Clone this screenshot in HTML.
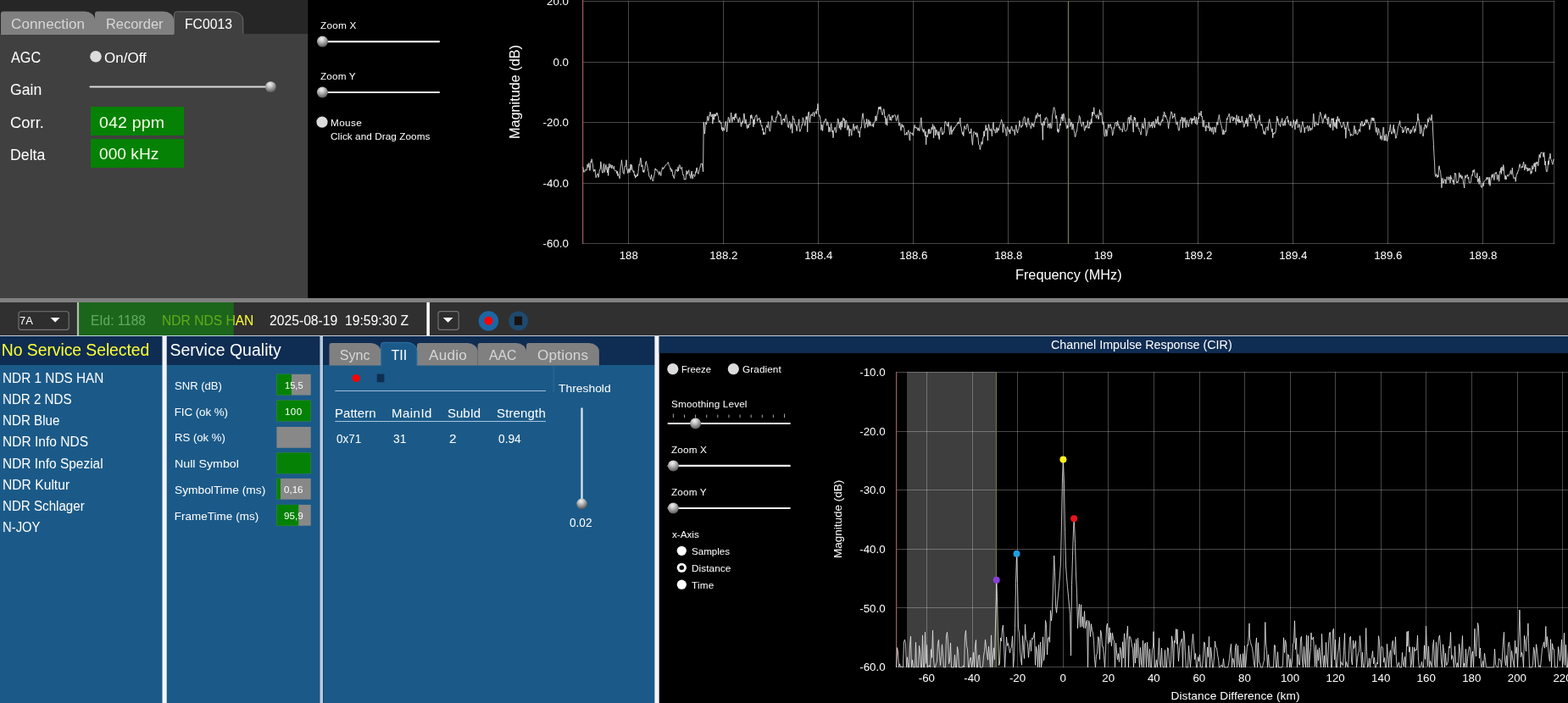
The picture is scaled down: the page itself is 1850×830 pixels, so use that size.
<!DOCTYPE html>
<html lang="en"><head><meta charset="utf-8"><title>DAB Receiver</title>
<style>
html,body{margin:0;padding:0;background:#000;}
body{width:1850px;height:830px;overflow:hidden;position:relative;font-family:"Liberation Sans", sans-serif;}
#root{position:absolute;left:0;top:0;width:1850px;height:830px;overflow:hidden;will-change:transform;background:#000;}
#root>svg{position:absolute;left:0;top:0;}
.t{position:absolute;white-space:pre;line-height:1.2;color:#fff;transform-origin:0 0;}
svg text{font-family:"Liberation Sans", sans-serif;font-size:13.3px;fill:#fff;}
</style></head><body><div id="root">
<svg width="1850" height="830" viewBox="0 0 1850 830">
<defs><radialGradient id="th" cx="0.42" cy="0.26" r="0.8"><stop offset="0" stop-color="#f2f2f2"/><stop offset="0.3" stop-color="#c8c8c8"/><stop offset="0.62" stop-color="#8e8e8e"/><stop offset="1" stop-color="#4a4a4a"/></radialGradient></defs>
<rect x="0" y="0" width="363.5" height="40" fill="#262626"/>
<rect x="0" y="40" width="363.5" height="312" fill="#404040"/>
<rect x="363.5" y="0" width="1486.5" height="352" fill="#000"/>
<path d="M1 41V16.6Q1 13.6 4 13.6H100A12 10 0 0 1 112 23.6V41Z" fill="#808080"/>
<path d="M112 41V16.6Q112 13.6 115 13.6H193A12 10 0 0 1 205 23.6V41Z" fill="#808080"/>
<path d="M205.5 41V16.8Q205.5 13.8 208.5 13.8H274.8A12 10 0 0 1 286.8 23.8V41" fill="#404040" stroke="#6c6c6c" stroke-width="1"/>
<rect x="205" y="40" width="82.5" height="2" fill="#404040"/>
<circle cx="113" cy="66.8" r="6.8" fill="#dcdcdc"/>
<path d="M106.5 102.4H319" fill="none" stroke="#dadada" stroke-width="2" stroke-linecap="round"/>
<circle cx="319.4" cy="102.6" r="6.4" fill="url(#th)"/>
<rect x="107" y="126.1" width="110" height="33.8" fill="#058205"/>
<rect x="107" y="164.1" width="110" height="33.8" fill="#058205"/>
<path d="M379 49.1H518" fill="none" stroke="#ececec" stroke-width="2.2" stroke-linecap="round"/>
<circle cx="380.5" cy="49.1" r="6.5" fill="url(#th)"/>
<path d="M379 109H518" fill="none" stroke="#ececec" stroke-width="2.2" stroke-linecap="round"/>
<circle cx="380.4" cy="109" r="6.5" fill="url(#th)"/>
<circle cx="380" cy="144.1" r="6.65" fill="#dcdcdc"/>
<path d="M741.5 1V288M853.5 1V288M965.5 1V288M1077.5 1V288M1189.5 1V288M1301.5 1V288M1413.5 1V288M1525.5 1V288M1637.5 1V288M1749.5 1V288M687 1.5H1834M687 73.5H1834M687 144.5H1834M687 216.5H1834M687 287.5H1834M1833.5 1V288" fill="none" stroke="rgba(255,255,255,0.28)" stroke-width="1"/>
<path d="M1260.5 1V288" fill="none" stroke="#727a42" stroke-width="1.3"/>
<path d="M687.6 0V288" fill="none" stroke="#98595c" stroke-width="1.3"/>
<polyline points="687.5,197.0 688.1,198.4 688.6,203.2 689.2,202.5 689.7,203.2 690.3,200.3 690.9,200.0 691.4,201.0 692.0,201.4 692.5,200.1 693.1,193.9 693.7,197.4 694.2,197.6 694.8,192.4 695.3,195.3 695.9,201.3 696.5,197.8 697.0,190.3 697.6,191.6 698.1,187.7 698.7,191.0 699.3,193.4 699.8,198.2 700.4,202.5 700.9,200.2 701.5,201.7 702.0,200.2 702.6,205.9 703.2,209.8 703.7,207.9 704.3,206.4 704.8,205.1 705.4,205.2 706.0,209.4 706.5,207.9 707.1,202.3 707.6,200.1 708.2,199.9 708.8,190.8 709.3,194.1 709.9,200.6 710.4,202.9 711.0,204.3 711.6,203.0 712.1,194.3 712.7,193.3 713.2,203.4 713.8,201.1 714.4,197.0 714.9,194.4 715.5,199.8 716.0,199.9 716.6,204.0 717.2,197.2 717.7,207.4 718.3,197.8 718.8,193.2 719.4,198.2 720.0,197.2 720.5,194.4 721.1,196.5 721.6,198.9 722.2,194.8 722.8,197.5 723.3,198.8 723.9,199.4 724.4,196.2 725.0,200.5 725.6,201.9 726.1,201.7 726.7,201.5 727.2,201.3 727.8,204.9 728.3,202.1 728.9,207.5 729.5,204.8 730.0,208.0 730.6,208.3 731.1,210.8 731.7,201.8 732.3,196.4 732.8,194.2 733.4,188.8 733.9,192.5 734.5,197.9 735.1,204.0 735.6,204.3 736.2,205.5 736.7,199.9 737.3,195.8 737.9,196.7 738.4,195.4 739.0,188.8 739.5,200.1 740.1,199.7 740.7,204.5 741.2,203.2 741.8,199.4 742.3,199.1 742.9,203.7 743.5,199.7 744.0,193.9 744.6,200.6 745.1,194.5 745.7,196.4 746.3,201.6 746.8,201.0 747.4,203.6 747.9,201.8 748.5,207.4 749.1,206.1 749.6,210.2 750.2,207.0 750.7,208.9 751.3,207.7 751.9,205.6 752.4,207.7 753.0,203.2 753.5,198.6 754.1,194.1 754.6,195.1 755.2,190.0 755.8,186.4 756.3,188.2 756.9,197.1 757.4,195.1 758.0,194.7 758.6,203.0 759.1,200.8 759.7,203.7 760.2,202.2 760.8,199.3 761.4,195.2 761.9,191.1 762.5,190.4 763.0,194.0 763.6,195.2 764.2,198.2 764.7,201.9 765.3,203.1 765.8,208.4 766.4,208.7 767.0,209.1 767.5,211.9 768.1,209.3 768.6,206.2 769.2,210.8 769.8,211.9 770.3,214.0 770.9,211.7 771.4,208.9 772.0,206.5 772.6,202.5 773.1,198.8 773.7,200.8 774.2,200.9 774.8,200.0 775.4,202.1 775.9,201.9 776.5,203.6 777.0,203.6 777.6,206.6 778.2,202.5 778.7,205.0 779.3,204.7 779.8,207.6 780.4,201.6 780.9,201.3 781.5,197.8 782.1,198.0 782.6,199.6 783.2,197.6 783.7,198.2 784.3,196.4 784.9,196.1 785.4,194.7 786.0,194.3 786.5,194.2 787.1,193.6 787.7,192.9 788.2,191.5 788.8,193.6 789.3,195.2 789.9,196.4 790.5,197.2 791.0,200.4 791.6,198.7 792.1,202.7 792.7,200.1 793.3,202.3 793.8,207.7 794.4,207.2 794.9,209.5 795.5,210.7 796.1,205.3 796.6,203.1 797.2,200.3 797.7,200.3 798.3,200.2 798.9,202.0 799.4,202.6 800.0,197.3 800.5,201.8 801.1,195.6 801.7,194.7 802.2,194.9 802.8,199.2 803.3,199.2 803.9,199.3 804.5,197.2 805.0,202.0 805.6,205.8 806.1,207.0 806.7,206.4 807.2,212.2 807.8,211.4 808.4,211.2 808.9,212.2 809.5,207.5 810.0,201.5 810.6,205.8 811.2,205.0 811.7,202.5 812.3,202.5 812.8,200.7 813.4,207.1 814.0,206.4 814.5,209.6 815.1,210.6 815.6,203.9 816.2,202.0 816.8,209.6 817.3,211.1 817.9,206.2 818.4,205.8 819.0,207.1 819.6,208.6 820.1,207.2 820.7,202.6 821.2,203.6 821.8,198.2 822.4,198.2 822.9,203.4 823.5,204.5 824.0,205.4 824.6,202.4 825.2,199.3 825.7,198.5 826.3,196.0 826.8,194.2 827.4,192.8 828.0,193.6 828.5,193.3 829.1,199.1 829.6,202.8 830.2,144.2 830.8,150.6 831.3,158.1 831.9,154.0 832.4,144.4 833.0,144.9 833.5,147.0 834.1,142.6 834.7,137.1 835.2,139.6 835.8,142.6 836.3,140.8 836.9,135.7 837.5,136.4 838.0,132.0 838.6,135.4 839.1,137.8 839.7,136.4 840.3,134.8 840.8,146.1 841.4,141.4 841.9,134.8 842.5,141.3 843.1,134.6 843.6,137.4 844.2,135.0 844.7,136.9 845.3,133.2 845.9,135.3 846.4,133.5 847.0,137.0 847.5,137.6 848.1,144.0 848.7,144.3 849.2,142.3 849.8,144.5 850.3,146.0 850.9,144.4 851.5,153.0 852.0,150.1 852.6,154.9 853.1,153.4 853.7,150.9 854.3,154.1 854.8,153.4 855.4,148.0 855.9,144.4 856.5,143.2 857.0,147.3 857.6,155.7 858.2,149.7 858.7,143.8 859.3,138.3 859.8,139.3 860.4,142.1 861.0,144.9 861.5,143.4 862.1,139.1 862.6,133.0 863.2,138.6 863.8,144.6 864.3,139.8 864.9,138.2 865.4,140.3 866.0,138.0 866.6,142.2 867.1,134.8 867.7,139.0 868.2,133.7 868.8,136.8 869.4,140.0 869.9,140.3 870.5,140.9 871.0,144.8 871.6,143.3 872.2,139.1 872.7,138.7 873.3,143.9 873.8,145.1 874.4,149.5 875.0,144.6 875.5,146.3 876.1,142.7 876.6,144.7 877.2,139.8 877.8,133.9 878.3,135.5 878.9,145.8 879.4,145.5 880.0,140.8 880.6,146.2 881.1,150.1 881.7,151.9 882.2,147.4 882.8,151.0 883.3,150.4 883.9,146.3 884.5,147.2 885.0,147.3 885.6,136.2 886.1,139.8 886.7,135.5 887.3,137.6 887.8,139.3 888.4,141.8 888.9,149.8 889.5,141.0 890.1,146.9 890.6,138.9 891.2,138.2 891.7,137.1 892.3,135.9 892.9,135.7 893.4,143.0 894.0,142.8 894.5,139.9 895.1,140.7 895.7,139.7 896.2,139.3 896.8,144.8 897.3,142.0 897.9,147.3 898.5,149.1 899.0,148.0 899.6,153.9 900.1,151.8 900.7,159.1 901.3,156.2 901.8,158.6 902.4,158.6 902.9,158.4 903.5,150.9 904.1,150.0 904.6,147.8 905.2,150.0 905.7,151.0 906.3,143.6 906.9,144.5 907.4,152.6 908.0,154.0 908.5,155.2 909.1,151.1 909.6,144.2 910.2,142.5 910.8,136.5 911.3,139.6 911.9,141.5 912.4,143.2 913.0,143.5 913.6,142.9 914.1,144.3 914.7,143.0 915.2,143.7 915.8,138.0 916.4,138.3 916.9,138.7 917.5,130.8 918.0,131.0 918.6,134.7 919.2,132.7 919.7,133.7 920.3,136.8 920.8,134.7 921.4,138.8 922.0,146.7 922.5,147.4 923.1,141.5 923.6,141.7 924.2,140.3 924.8,141.9 925.3,140.2 925.9,143.8 926.4,139.8 927.0,136.9 927.6,135.2 928.1,139.0 928.7,141.9 929.2,146.7 929.8,149.9 930.4,150.8 930.9,146.1 931.5,143.2 932.0,144.1 932.6,152.3 933.2,150.1 933.7,145.7 934.3,146.8 934.8,157.3 935.4,136.8 935.9,140.8 936.5,140.4 937.1,140.1 937.6,145.0 938.2,147.0 938.7,148.2 939.3,147.6 939.9,154.6 940.4,154.3 941.0,148.2 941.5,147.9 942.1,145.2 942.7,140.7 943.2,151.6 943.8,155.5 944.3,153.9 944.9,152.4 945.5,151.4 946.0,147.4 946.6,148.1 947.1,138.8 947.7,139.5 948.3,141.9 948.8,144.1 949.4,147.5 949.9,148.5 950.5,144.1 951.1,137.6 951.6,140.9 952.2,137.5 952.7,155.8 953.3,135.8 953.9,132.7 954.4,131.9 955.0,142.5 955.5,144.5 956.1,140.2 956.7,135.4 957.2,135.4 957.8,135.0 958.3,137.0 958.9,133.5 959.5,132.7 960.0,132.4 960.6,137.7 961.1,134.4 961.7,134.1 962.2,131.7 962.8,131.7 963.4,134.6 963.9,128.7 964.5,129.9 965.0,122.4 965.6,133.7 966.2,135.2 966.7,137.3 967.3,136.7 967.8,141.2 968.4,143.4 969.0,153.6 969.5,147.5 970.1,147.6 970.6,154.5 971.2,147.5 971.8,146.7 972.3,143.4 972.9,144.1 973.4,141.9 974.0,140.2 974.6,140.7 975.1,143.4 975.7,148.4 976.2,144.1 976.8,144.3 977.4,147.5 977.9,155.9 978.5,150.2 979.0,151.4 979.6,155.4 980.2,148.0 980.7,145.7 981.3,151.3 981.8,156.1 982.4,154.2 983.0,162.8 983.5,155.5 984.1,153.4 984.6,152.2 985.2,150.2 985.8,152.9 986.3,156.7 986.9,153.9 987.4,148.7 988.0,146.0 988.5,140.1 989.1,140.5 989.7,146.2 990.2,151.4 990.8,147.3 991.3,144.2 991.9,153.3 992.5,145.8 993.0,142.8 993.6,150.2 994.1,144.2 994.7,139.0 995.3,140.2 995.8,142.4 996.4,140.4 996.9,151.2 997.5,145.0 998.1,142.2 998.6,142.2 999.2,146.6 999.7,153.7 1000.3,152.3 1000.9,147.8 1001.4,148.6 1002.0,161.0 1002.5,151.9 1003.1,153.4 1003.7,152.9 1004.2,155.5 1004.8,160.0 1005.3,152.5 1005.9,151.8 1006.5,150.2 1007.0,146.2 1007.6,154.2 1008.1,152.3 1008.7,149.9 1009.3,149.1 1009.8,150.1 1010.4,152.3 1010.9,148.2 1011.5,148.0 1012.1,152.2 1012.6,156.7 1013.2,156.0 1013.7,155.0 1014.3,162.1 1014.8,154.3 1015.4,150.3 1016.0,151.1 1016.5,149.0 1017.1,139.7 1017.6,134.4 1018.2,133.7 1018.8,140.3 1019.3,141.3 1019.9,147.7 1020.4,151.3 1021.0,148.6 1021.6,144.9 1022.1,145.8 1022.7,140.3 1023.2,145.8 1023.8,150.2 1024.4,146.2 1024.9,141.4 1025.5,144.9 1026.0,148.7 1026.6,143.5 1027.2,145.8 1027.7,148.4 1028.3,147.9 1028.8,148.6 1029.4,148.7 1030.0,145.8 1030.5,150.1 1031.1,145.1 1031.6,143.9 1032.2,143.8 1032.8,137.1 1033.3,136.9 1033.9,142.8 1034.4,141.2 1035.0,135.4 1035.6,134.8 1036.1,130.8 1036.7,126.4 1037.2,129.0 1037.8,126.3 1038.4,129.1 1038.9,125.7 1039.5,128.0 1040.0,132.9 1040.6,133.3 1041.1,135.9 1041.7,134.2 1042.3,129.4 1042.8,128.6 1043.4,131.8 1043.9,138.8 1044.5,137.4 1045.1,146.9 1045.6,139.6 1046.2,142.3 1046.7,148.2 1047.3,138.7 1047.9,137.1 1048.4,135.4 1049.0,134.9 1049.5,137.2 1050.1,142.0 1050.7,137.9 1051.2,141.9 1051.8,142.4 1052.3,138.0 1052.9,136.1 1053.5,138.7 1054.0,137.9 1054.6,136.4 1055.1,136.4 1055.7,135.4 1056.3,136.1 1056.8,138.9 1057.4,142.7 1057.9,142.1 1058.5,138.3 1059.1,136.6 1059.6,135.7 1060.2,143.1 1060.7,148.5 1061.3,145.6 1061.9,145.1 1062.4,150.1 1063.0,154.2 1063.5,149.9 1064.1,146.4 1064.7,149.9 1065.2,150.3 1065.8,147.9 1066.3,150.8 1066.9,151.6 1067.4,159.5 1068.0,158.5 1068.6,158.6 1069.1,158.7 1069.7,156.2 1070.2,159.5 1070.8,156.9 1071.4,155.1 1071.9,153.6 1072.5,157.9 1073.0,164.2 1073.6,166.0 1074.2,155.8 1074.7,157.4 1075.3,157.7 1075.8,157.5 1076.4,157.0 1077.0,159.6 1077.5,160.1 1078.1,154.0 1078.6,149.5 1079.2,147.5 1079.8,151.3 1080.3,150.9 1080.9,149.9 1081.4,151.6 1082.0,150.8 1082.6,153.9 1083.1,154.0 1083.7,150.8 1084.2,152.7 1084.8,154.7 1085.4,150.9 1085.9,146.5 1086.5,139.7 1087.0,138.8 1087.6,149.2 1088.2,153.6 1088.7,152.5 1089.3,156.2 1089.8,153.1 1090.4,152.5 1091.0,158.4 1091.5,160.7 1092.1,155.1 1092.6,170.8 1093.2,159.7 1093.7,160.1 1094.3,161.9 1094.9,158.0 1095.4,152.7 1096.0,157.9 1096.5,152.3 1097.1,156.1 1097.7,157.7 1098.2,157.4 1098.8,152.0 1099.3,150.2 1099.9,152.9 1100.5,146.6 1101.0,149.6 1101.6,162.8 1102.1,148.7 1102.7,151.9 1103.3,150.6 1103.8,159.9 1104.4,155.0 1104.9,153.0 1105.5,155.8 1106.1,158.1 1106.6,159.7 1107.2,155.1 1107.7,163.2 1108.3,164.7 1108.9,155.9 1109.4,154.3 1110.0,151.1 1110.5,150.1 1111.1,152.6 1111.7,159.1 1112.2,157.4 1112.8,158.7 1113.3,155.7 1113.9,156.6 1114.5,149.3 1115.0,143.3 1115.6,143.4 1116.1,145.4 1116.7,145.3 1117.2,148.4 1117.8,147.1 1118.4,149.3 1118.9,143.9 1119.5,148.3 1120.0,153.1 1120.6,159.1 1121.2,155.0 1121.7,149.6 1122.3,148.4 1122.8,158.7 1123.4,154.0 1124.0,155.3 1124.5,152.5 1125.1,153.7 1125.6,150.5 1126.2,151.5 1126.8,151.0 1127.3,148.9 1127.9,148.6 1128.4,147.8 1129.0,148.1 1129.6,145.0 1130.1,145.9 1130.7,143.8 1131.2,146.0 1131.8,146.3 1132.4,140.8 1132.9,139.0 1133.5,149.1 1134.0,149.4 1134.6,154.7 1135.2,156.9 1135.7,158.7 1136.3,155.7 1136.8,160.6 1137.4,151.8 1138.0,148.6 1138.5,150.6 1139.1,152.1 1139.6,152.9 1140.2,150.6 1140.8,147.0 1141.3,146.2 1141.9,146.9 1142.4,151.9 1143.0,155.1 1143.5,155.6 1144.1,157.8 1144.7,155.8 1145.2,157.0 1145.8,151.9 1146.3,158.8 1146.9,167.7 1147.5,171.3 1148.0,163.7 1148.6,157.5 1149.1,155.3 1149.7,156.4 1150.3,156.7 1150.8,158.9 1151.4,158.2 1151.9,156.5 1152.5,161.6 1153.1,157.4 1153.6,159.7 1154.2,164.8 1154.7,170.7 1155.3,171.1 1155.9,173.6 1156.4,176.7 1157.0,173.1 1157.5,169.9 1158.1,167.3 1158.7,170.1 1159.2,170.5 1159.8,162.2 1160.3,162.2 1160.9,154.9 1161.5,160.8 1162.0,154.1 1162.6,154.3 1163.1,147.6 1163.7,154.0 1164.3,151.3 1164.8,155.3 1165.4,165.9 1165.9,152.4 1166.5,146.5 1167.1,150.1 1167.6,153.3 1168.2,154.5 1168.7,152.7 1169.3,152.1 1169.8,155.1 1170.4,160.8 1171.0,151.9 1171.5,147.0 1172.1,144.3 1172.6,153.6 1173.2,154.0 1173.8,152.9 1174.3,157.0 1174.9,157.1 1175.4,151.9 1176.0,150.4 1176.6,156.4 1177.1,151.5 1177.7,151.9 1178.2,154.2 1178.8,151.0 1179.4,147.9 1179.9,147.5 1180.5,144.3 1181.0,143.8 1181.6,140.9 1182.2,143.5 1182.7,145.2 1183.3,156.5 1183.8,147.9 1184.4,146.3 1185.0,149.8 1185.5,150.5 1186.1,153.2 1186.6,152.7 1187.2,160.6 1187.8,160.2 1188.3,149.7 1188.9,150.0 1189.4,151.8 1190.0,153.1 1190.6,155.6 1191.1,152.9 1191.7,158.1 1192.2,153.9 1192.8,152.2 1193.4,148.9 1193.9,149.4 1194.5,154.1 1195.0,154.7 1195.6,154.1 1196.1,153.2 1196.7,154.3 1197.3,159.6 1197.8,153.2 1198.4,151.1 1198.9,147.5 1199.5,154.2 1200.1,156.0 1200.6,157.1 1201.2,152.9 1201.7,152.9 1202.3,149.8 1202.9,142.4 1203.4,148.6 1204.0,148.3 1204.5,150.4 1205.1,150.5 1205.7,147.9 1206.2,148.9 1206.8,147.3 1207.3,140.1 1207.9,139.6 1208.5,137.8 1209.0,138.0 1209.6,144.9 1210.1,147.5 1210.7,145.0 1211.3,150.3 1211.8,147.7 1212.4,142.4 1212.9,139.3 1213.5,139.7 1214.1,146.9 1214.6,145.8 1215.2,148.6 1215.7,149.0 1216.3,151.9 1216.9,150.8 1217.4,145.2 1218.0,148.4 1218.5,146.8 1219.1,145.8 1219.7,150.1 1220.2,146.2 1220.8,144.1 1221.3,142.3 1221.9,138.0 1222.4,135.8 1223.0,139.7 1223.6,138.0 1224.1,133.4 1224.7,135.2 1225.2,137.5 1225.8,135.8 1226.4,137.3 1226.9,137.3 1227.5,134.9 1228.0,145.3 1228.6,147.4 1229.2,147.8 1229.7,145.5 1230.3,165.3 1230.8,146.1 1231.4,143.1 1232.0,148.2 1232.5,146.7 1233.1,139.6 1233.6,141.6 1234.2,138.2 1234.8,138.6 1235.3,139.7 1235.9,140.8 1236.4,150.8 1237.0,146.8 1237.6,147.8 1238.1,145.9 1238.7,151.5 1239.2,145.3 1239.8,147.3 1240.4,151.6 1240.9,149.6 1241.5,137.0 1242.0,134.9 1242.6,132.2 1243.2,127.0 1243.7,126.7 1244.3,129.2 1244.8,129.7 1245.4,139.3 1246.0,140.1 1246.5,136.5 1247.1,142.9 1247.6,155.3 1248.2,152.2 1248.7,156.5 1249.3,155.4 1249.9,152.4 1250.4,145.9 1251.0,148.3 1251.5,145.5 1252.1,138.1 1252.7,140.2 1253.2,134.8 1253.8,142.9 1254.3,142.9 1254.9,134.0 1255.5,136.9 1256.0,138.8 1256.6,141.2 1257.1,145.0 1257.7,145.0 1258.3,150.6 1258.8,151.9 1259.4,147.9 1259.9,151.0 1260.5,145.9 1261.1,140.1 1261.6,140.1 1262.2,141.5 1262.7,149.5 1263.3,147.4 1263.9,144.9 1264.4,144.0 1265.0,153.2 1265.5,147.7 1266.1,146.0 1266.7,151.3 1267.2,154.5 1267.8,157.3 1268.3,161.6 1268.9,161.5 1269.5,157.2 1270.0,155.1 1270.6,155.2 1271.1,149.7 1271.7,144.9 1272.3,145.1 1272.8,142.2 1273.4,136.5 1273.9,137.8 1274.5,139.0 1275.0,145.7 1275.6,145.5 1276.2,149.4 1276.7,147.7 1277.3,146.5 1277.8,143.7 1278.4,144.7 1279.0,150.4 1279.5,154.4 1280.1,153.5 1280.6,149.8 1281.2,148.4 1281.8,150.9 1282.3,147.8 1282.9,147.3 1283.4,142.5 1284.0,151.4 1284.6,150.0 1285.1,151.4 1285.7,144.2 1286.2,146.0 1286.8,147.0 1287.4,140.5 1287.9,145.6 1288.5,132.4 1289.0,137.1 1289.6,132.5 1290.2,134.1 1290.7,126.8 1291.3,135.0 1291.8,135.4 1292.4,136.4 1293.0,136.1 1293.5,139.5 1294.1,136.9 1294.6,135.3 1295.2,136.4 1295.8,140.7 1296.3,140.8 1296.9,135.1 1297.4,129.5 1298.0,134.9 1298.6,135.9 1299.1,132.6 1299.7,133.7 1300.2,139.1 1300.8,145.2 1301.3,147.2 1301.9,143.7 1302.5,147.7 1303.0,159.1 1303.6,161.3 1304.1,157.8 1304.7,152.5 1305.3,154.0 1305.8,160.8 1306.4,156.4 1306.9,153.5 1307.5,146.5 1308.1,149.5 1308.6,150.8 1309.2,147.1 1309.7,148.3 1310.3,146.6 1310.9,151.3 1311.4,150.4 1312.0,153.7 1312.5,160.2 1313.1,158.6 1313.7,155.8 1314.2,150.5 1314.8,151.7 1315.3,147.4 1315.9,145.0 1316.5,144.8 1317.0,144.1 1317.6,149.2 1318.1,146.5 1318.7,142.6 1319.3,148.1 1319.8,146.5 1320.4,151.3 1320.9,149.2 1321.5,153.4 1322.1,152.8 1322.6,152.0 1323.2,152.3 1323.7,152.9 1324.3,155.9 1324.9,150.9 1325.4,144.9 1326.0,145.5 1326.5,150.6 1327.1,154.4 1327.6,154.5 1328.2,155.2 1328.8,154.3 1329.3,153.9 1329.9,151.9 1330.4,149.3 1331.0,139.5 1331.6,140.4 1332.1,138.0 1332.7,146.3 1333.2,142.7 1333.8,138.2 1334.4,135.9 1334.9,141.5 1335.5,141.1 1336.0,143.3 1336.6,148.8 1337.2,156.1 1337.7,142.8 1338.3,138.0 1338.8,141.6 1339.4,139.0 1340.0,144.8 1340.5,149.8 1341.1,149.2 1341.6,145.7 1342.2,144.2 1342.8,149.8 1343.3,152.2 1343.9,151.4 1344.4,155.3 1345.0,156.1 1345.6,156.4 1346.1,159.2 1346.7,153.5 1347.2,150.1 1347.8,145.5 1348.4,150.7 1348.9,149.7 1349.5,152.1 1350.0,146.3 1350.6,139.4 1351.2,143.7 1351.7,149.1 1352.3,160.4 1352.8,158.5 1353.4,156.8 1353.9,153.9 1354.5,150.1 1355.1,144.1 1355.6,143.9 1356.2,144.2 1356.7,150.7 1357.3,147.8 1357.9,147.8 1358.4,148.6 1359.0,144.3 1359.5,151.2 1360.1,146.7 1360.7,143.0 1361.2,145.4 1361.8,149.6 1362.3,150.8 1362.9,147.3 1363.5,140.6 1364.0,141.0 1364.6,145.7 1365.1,144.5 1365.7,139.1 1366.3,137.3 1366.8,147.1 1367.4,144.7 1367.9,144.6 1368.5,148.0 1369.1,148.2 1369.6,146.3 1370.2,142.9 1370.7,143.6 1371.3,140.6 1371.9,143.1 1372.4,135.9 1373.0,137.2 1373.5,131.9 1374.1,133.4 1374.7,138.4 1375.2,136.1 1375.8,136.8 1376.3,139.2 1376.9,140.8 1377.5,142.3 1378.0,145.5 1378.6,151.8 1379.1,147.5 1379.7,145.0 1380.2,140.6 1380.8,137.6 1381.4,135.8 1381.9,131.7 1382.5,133.5 1383.0,133.4 1383.6,139.8 1384.2,137.1 1384.7,138.1 1385.3,137.6 1385.8,133.9 1386.4,139.1 1387.0,141.3 1387.5,145.5 1388.1,147.2 1388.6,145.7 1389.2,143.6 1389.8,149.6 1390.3,153.2 1390.9,154.4 1391.4,153.7 1392.0,148.1 1392.6,141.6 1393.1,142.8 1393.7,141.4 1394.2,138.1 1394.8,139.9 1395.4,151.2 1395.9,138.7 1396.5,141.7 1397.0,143.7 1397.6,140.9 1398.2,138.7 1398.7,145.1 1399.3,150.6 1399.8,144.9 1400.4,141.6 1401.0,147.2 1401.5,147.2 1402.1,149.9 1402.6,149.2 1403.2,142.0 1403.8,142.1 1404.3,140.6 1404.9,139.3 1405.4,141.0 1406.0,146.5 1406.5,139.8 1407.1,142.8 1407.7,139.9 1408.2,141.6 1408.8,139.9 1409.3,137.1 1409.9,144.0 1410.5,146.1 1411.0,140.9 1411.6,138.3 1412.1,147.3 1412.7,145.1 1413.3,141.2 1413.8,139.0 1414.4,140.2 1414.9,133.1 1415.5,135.2 1416.1,136.5 1416.6,134.6 1417.2,131.0 1417.7,138.0 1418.3,137.2 1418.9,144.9 1419.4,150.0 1420.0,141.9 1420.5,141.9 1421.1,149.6 1421.7,150.5 1422.2,149.4 1422.8,155.0 1423.3,147.6 1423.9,149.9 1424.5,149.7 1425.0,149.6 1425.6,151.2 1426.1,144.3 1426.7,147.6 1427.3,154.8 1427.8,149.7 1428.4,152.4 1428.9,151.8 1429.5,155.5 1430.0,151.0 1430.6,150.3 1431.2,156.3 1431.7,158.5 1432.3,150.0 1432.8,150.3 1433.4,150.4 1434.0,156.4 1434.5,153.5 1435.1,149.3 1435.6,144.3 1436.2,144.1 1436.8,147.5 1437.3,140.4 1437.9,139.0 1438.4,135.5 1439.0,141.0 1439.6,142.7 1440.1,145.2 1440.7,147.1 1441.2,149.3 1441.8,151.5 1442.4,157.1 1442.9,159.1 1443.5,153.1 1444.0,158.6 1444.6,158.2 1445.2,154.5 1445.7,156.0 1446.3,155.3 1446.8,149.8 1447.4,139.7 1448.0,141.3 1448.5,138.7 1449.1,137.1 1449.6,137.0 1450.2,134.2 1450.8,136.6 1451.3,144.9 1451.9,142.1 1452.4,138.6 1453.0,137.7 1453.6,138.4 1454.1,137.6 1454.7,143.0 1455.2,142.1 1455.8,138.3 1456.3,140.5 1456.9,139.3 1457.5,139.8 1458.0,143.8 1458.6,147.3 1459.1,135.7 1459.7,142.6 1460.3,141.2 1460.8,143.8 1461.4,137.2 1461.9,145.1 1462.5,141.2 1463.1,145.0 1463.6,143.0 1464.2,144.5 1464.7,143.3 1465.3,136.9 1465.9,143.3 1466.4,142.6 1467.0,146.1 1467.5,150.3 1468.1,149.8 1468.7,146.2 1469.2,146.3 1469.8,142.2 1470.3,145.7 1470.9,139.1 1471.5,142.0 1472.0,149.3 1472.6,144.4 1473.1,140.6 1473.7,139.0 1474.3,134.8 1474.8,138.1 1475.4,135.7 1475.9,143.0 1476.5,138.2 1477.1,134.1 1477.6,135.8 1478.2,136.0 1478.7,136.8 1479.3,138.3 1479.9,142.5 1480.4,139.8 1481.0,146.3 1481.5,145.7 1482.1,151.6 1482.6,149.7 1483.2,146.7 1483.8,142.6 1484.3,142.4 1484.9,143.5 1485.4,141.0 1486.0,135.7 1486.6,142.4 1487.1,146.4 1487.7,147.5 1488.2,148.5 1488.8,146.3 1489.4,148.2 1489.9,152.7 1490.5,154.6 1491.0,158.3 1491.6,154.8 1492.2,156.7 1492.7,159.0 1493.3,154.9 1493.8,150.7 1494.4,150.6 1495.0,149.6 1495.5,151.1 1496.1,154.2 1496.6,145.6 1497.2,142.9 1497.8,140.6 1498.3,145.7 1498.9,145.6 1499.4,150.6 1500.0,152.3 1500.6,155.5 1501.1,151.9 1501.7,162.8 1502.2,157.0 1502.8,158.6 1503.4,156.7 1503.9,156.6 1504.5,157.4 1505.0,156.1 1505.6,150.2 1506.2,142.8 1506.7,137.1 1507.3,143.2 1507.8,139.9 1508.4,144.8 1508.9,147.6 1509.5,146.6 1510.1,147.2 1510.6,149.6 1511.2,143.8 1511.7,144.2 1512.3,140.7 1512.9,139.5 1513.4,148.2 1514.0,147.2 1514.5,148.3 1515.1,145.3 1515.7,142.6 1516.2,148.3 1516.8,140.7 1517.3,139.7 1517.9,139.9 1518.5,137.3 1519.0,137.0 1519.6,143.9 1520.1,141.8 1520.7,146.0 1521.3,147.3 1521.8,147.7 1522.4,148.6 1522.9,143.3 1523.5,147.8 1524.1,148.1 1524.6,150.7 1525.2,148.2 1525.7,146.2 1526.3,141.6 1526.9,145.0 1527.4,149.6 1528.0,153.0 1528.5,143.4 1529.1,146.6 1529.7,141.7 1530.2,140.7 1530.8,145.5 1531.3,150.8 1531.9,150.5 1532.5,147.3 1533.0,146.6 1533.6,149.0 1534.1,154.3 1534.7,156.4 1535.2,156.1 1535.8,148.0 1536.4,146.7 1536.9,143.4 1537.5,146.8 1538.0,150.3 1538.6,150.6 1539.2,156.8 1539.7,151.1 1540.3,150.4 1540.8,151.5 1541.4,151.3 1542.0,150.4 1542.5,148.1 1543.1,151.2 1543.6,155.1 1544.2,150.4 1544.8,148.5 1545.3,151.1 1545.9,154.3 1546.4,151.5 1547.0,151.3 1547.6,153.3 1548.1,152.7 1548.7,148.5 1549.2,141.1 1549.8,134.2 1550.4,140.7 1550.9,149.7 1551.5,147.6 1552.0,144.1 1552.6,143.9 1553.2,145.9 1553.7,147.6 1554.3,146.1 1554.8,146.7 1555.4,148.0 1556.0,142.7 1556.5,137.0 1557.1,135.3 1557.6,132.2 1558.2,133.6 1558.8,138.4 1559.3,138.5 1559.9,140.4 1560.4,145.6 1561.0,144.6 1561.5,141.4 1562.1,139.6 1562.7,136.5 1563.2,139.9 1563.8,134.5 1564.3,136.9 1564.9,139.6 1565.5,141.8 1566.0,140.7 1566.6,147.0 1567.1,138.0 1567.7,138.6 1568.3,149.3 1568.8,149.4 1569.4,146.6 1569.9,150.8 1570.5,144.9 1571.1,139.8 1571.6,141.8 1572.2,140.0 1572.7,153.8 1573.3,139.5 1573.9,146.1 1574.4,149.3 1575.0,144.6 1575.5,148.5 1576.1,150.5 1576.7,141.0 1577.2,152.2 1577.8,138.2 1578.3,137.4 1578.9,143.0 1579.5,143.2 1580.0,140.0 1580.6,144.5 1581.1,144.2 1581.7,146.6 1582.3,148.2 1582.8,150.6 1583.4,149.3 1583.9,149.6 1584.5,147.9 1585.1,143.9 1585.6,145.5 1586.2,146.1 1586.7,152.4 1587.3,150.8 1587.8,163.3 1588.4,153.7 1589.0,147.5 1589.5,147.1 1590.1,143.7 1590.6,148.9 1591.2,153.9 1591.8,152.7 1592.3,155.4 1592.9,156.4 1593.4,160.7 1594.0,158.0 1594.6,159.4 1595.1,160.0 1595.7,159.9 1596.2,159.9 1596.8,159.6 1597.4,150.5 1597.9,148.3 1598.5,149.8 1599.0,158.0 1599.6,153.1 1600.2,156.4 1600.7,157.3 1601.3,159.2 1601.8,158.2 1602.4,156.9 1603.0,153.6 1603.5,154.2 1604.1,152.4 1604.6,155.8 1605.2,145.6 1605.8,148.9 1606.3,143.8 1606.9,143.0 1607.4,145.9 1608.0,149.2 1608.6,147.0 1609.1,148.4 1609.7,145.3 1610.2,147.9 1610.8,144.2 1611.4,141.0 1611.9,143.7 1612.5,145.4 1613.0,141.2 1613.6,143.5 1614.1,144.2 1614.7,145.6 1615.3,147.7 1615.8,153.2 1616.4,150.0 1616.9,147.4 1617.5,144.3 1618.1,139.5 1618.6,138.9 1619.2,142.5 1619.7,139.0 1620.3,142.7 1620.9,139.3 1621.4,142.4 1622.0,143.5 1622.5,146.8 1623.1,154.3 1623.7,156.3 1624.2,150.4 1624.8,152.2 1625.3,159.5 1625.9,157.0 1626.5,151.6 1627.0,154.4 1627.6,155.5 1628.1,157.2 1628.7,164.3 1629.3,162.2 1629.8,160.3 1630.4,165.4 1630.9,163.8 1631.5,155.8 1632.1,150.0 1632.6,150.5 1633.2,166.2 1633.7,159.9 1634.3,164.5 1634.9,165.9 1635.4,158.3 1636.0,164.3 1636.5,166.8 1637.1,165.2 1637.7,160.0 1638.2,160.3 1638.8,154.9 1639.3,155.6 1639.9,149.9 1640.4,146.9 1641.0,153.7 1641.6,158.0 1642.1,158.4 1642.7,156.0 1643.2,156.0 1643.8,149.7 1644.4,147.2 1644.9,157.4 1645.5,152.4 1646.0,156.3 1646.6,163.3 1647.2,163.0 1647.7,160.9 1648.3,157.6 1648.8,155.4 1649.4,150.2 1650.0,148.4 1650.5,146.0 1651.1,146.0 1651.6,142.6 1652.2,148.9 1652.8,150.1 1653.3,150.2 1653.9,150.8 1654.4,150.3 1655.0,157.0 1655.6,153.9 1656.1,155.9 1656.7,152.3 1657.2,150.7 1657.8,150.0 1658.4,149.2 1658.9,153.0 1659.5,157.3 1660.0,152.3 1660.6,151.4 1661.2,153.5 1661.7,151.0 1662.3,154.9 1662.8,155.7 1663.4,155.7 1664.0,158.0 1664.5,152.9 1665.1,155.6 1665.6,156.3 1666.2,152.8 1666.7,151.2 1667.3,150.1 1667.9,148.8 1668.4,154.9 1669.0,156.5 1669.5,152.1 1670.1,154.6 1670.7,148.1 1671.2,147.9 1671.8,143.8 1672.3,143.4 1672.9,134.1 1673.5,141.8 1674.0,140.9 1674.6,149.1 1675.1,151.7 1675.7,158.1 1676.3,147.6 1676.8,149.8 1677.4,152.9 1677.9,157.4 1678.5,158.0 1679.1,161.0 1679.6,156.2 1680.2,150.5 1680.7,152.4 1681.3,146.7 1681.9,149.3 1682.4,147.7 1683.0,151.4 1683.5,149.3 1684.1,149.2 1684.7,140.2 1685.2,144.0 1685.8,141.5 1686.3,138.5 1686.9,139.2 1687.5,140.7 1688.0,142.5 1688.6,141.0 1689.1,135.4 1689.7,141.6 1690.2,144.4 1690.8,158.9 1691.4,170.3 1691.9,181.3 1692.5,191.2 1693.0,203.7 1693.6,208.6 1694.2,207.7 1694.7,205.6 1695.3,206.6 1695.8,209.8 1696.4,206.9 1697.0,208.9 1697.5,197.8 1698.1,195.8 1698.6,199.4 1699.2,201.2 1699.8,204.6 1700.3,209.9 1700.9,221.7 1701.4,212.3 1702.0,210.3 1702.6,216.3 1703.1,214.7 1703.7,215.6 1704.2,211.5 1704.8,212.9 1705.4,212.3 1705.9,217.1 1706.5,213.3 1707.0,208.7 1707.6,209.6 1708.2,209.8 1708.7,212.7 1709.3,208.7 1709.8,210.0 1710.4,209.5 1711.0,216.0 1711.5,206.9 1712.1,211.0 1712.6,209.7 1713.2,212.7 1713.8,213.4 1714.3,215.3 1714.9,212.5 1715.4,218.0 1716.0,210.4 1716.5,204.0 1717.1,205.6 1717.7,204.9 1718.2,214.4 1718.8,216.0 1719.3,214.2 1719.9,215.6 1720.5,214.1 1721.0,211.6 1721.6,203.9 1722.1,206.9 1722.7,209.4 1723.3,206.2 1723.8,209.3 1724.4,210.9 1724.9,207.5 1725.5,208.8 1726.1,211.9 1726.6,216.7 1727.2,218.5 1727.7,222.0 1728.3,211.0 1728.9,207.1 1729.4,210.0 1730.0,208.8 1730.5,207.5 1731.1,206.0 1731.7,208.5 1732.2,211.2 1732.8,209.1 1733.3,215.7 1733.9,215.4 1734.5,215.9 1735.0,215.9 1735.6,213.8 1736.1,207.6 1736.7,206.3 1737.3,207.4 1737.8,201.2 1738.4,203.3 1738.9,200.7 1739.5,200.0 1740.1,206.2 1740.6,209.0 1741.2,209.6 1741.7,209.5 1742.3,209.6 1742.8,204.3 1743.4,214.6 1744.0,211.0 1744.5,211.0 1745.1,217.5 1745.6,208.0 1746.2,214.1 1746.8,213.9 1747.3,220.7 1747.9,220.6 1748.4,221.5 1749.0,218.2 1749.6,215.9 1750.1,219.9 1750.7,215.8 1751.2,213.7 1751.8,213.1 1752.4,212.6 1752.9,213.1 1753.5,212.1 1754.0,209.3 1754.6,211.6 1755.2,211.8 1755.7,209.3 1756.3,211.3 1756.8,217.6 1757.4,209.2 1758.0,219.4 1758.5,215.8 1759.1,212.1 1759.6,209.5 1760.2,206.2 1760.8,209.6 1761.3,207.3 1761.9,205.4 1762.4,211.6 1763.0,212.7 1763.6,207.2 1764.1,204.0 1764.7,205.0 1765.2,203.0 1765.8,205.3 1766.4,212.2 1766.9,212.0 1767.5,206.3 1768.0,207.3 1768.6,214.2 1769.1,207.7 1769.7,202.2 1770.3,203.4 1770.8,198.4 1771.4,205.5 1771.9,197.0 1772.5,198.6 1773.1,201.6 1773.6,194.6 1774.2,196.8 1774.7,204.7 1775.3,207.9 1775.9,211.8 1776.4,207.3 1777.0,212.1 1777.5,208.9 1778.1,208.3 1778.7,206.2 1779.2,207.6 1779.8,208.3 1780.3,206.1 1780.9,205.9 1781.5,204.6 1782.0,202.6 1782.6,201.2 1783.1,206.0 1783.7,205.5 1784.3,198.2 1784.8,204.7 1785.4,208.1 1785.9,210.8 1786.5,210.4 1787.1,210.3 1787.6,209.3 1788.2,214.4 1788.7,210.9 1789.3,205.5 1789.9,204.5 1790.4,205.2 1791.0,201.6 1791.5,201.8 1792.1,199.4 1792.7,195.0 1793.2,193.7 1793.8,196.6 1794.3,198.1 1794.9,198.5 1795.4,197.5 1796.0,196.0 1796.6,197.8 1797.1,193.1 1797.7,191.0 1798.2,195.6 1798.8,200.9 1799.4,196.9 1799.9,194.1 1800.5,199.2 1801.0,198.3 1801.6,198.0 1802.2,202.2 1802.7,198.3 1803.3,198.8 1803.8,201.6 1804.4,200.1 1805.0,198.4 1805.5,199.0 1806.1,205.5 1806.6,202.4 1807.2,204.1 1807.8,195.5 1808.3,199.3 1808.9,199.9 1809.4,196.5 1810.0,193.0 1810.6,196.7 1811.1,191.9 1811.7,202.7 1812.2,194.7 1812.8,191.5 1813.4,193.2 1813.9,190.9 1814.5,196.0 1815.0,194.4 1815.6,188.0 1816.2,182.4 1816.7,185.9 1817.3,186.3 1817.8,180.4 1818.4,179.9 1819.0,180.8 1819.5,179.9 1820.1,180.6 1820.6,183.1 1821.2,185.5 1821.7,179.7 1822.3,185.9 1822.9,195.0 1823.4,190.4 1824.0,199.3 1824.5,202.4 1825.1,202.9 1825.7,201.8 1826.2,195.3 1826.8,189.8 1827.3,194.4 1827.9,185.9 1828.5,186.4 1829.0,181.2 1829.6,187.3 1830.1,188.4 1830.7,190.4 1831.3,192.4 1831.8,194.2 1832.4,191.4 1832.9,188.0 1833.5,188.1" fill="none" stroke="#e4e4e4" stroke-width="0.85" stroke-linejoin="round"/>
<text x="670.9" y="6.1" text-anchor="end">20.0</text>
<text x="670.9" y="78.1" text-anchor="end">0.0</text>
<text x="670.9" y="149.1" text-anchor="end">-20.0</text>
<text x="670.9" y="221.1" text-anchor="end">-40.0</text>
<text x="670.9" y="292.1" text-anchor="end">-60.0</text>
<text x="741.8" y="305.7" text-anchor="middle">188</text>
<text x="853.8" y="305.7" text-anchor="middle">188.2</text>
<text x="965.8" y="305.7" text-anchor="middle">188.4</text>
<text x="1077.8" y="305.7" text-anchor="middle">188.6</text>
<text x="1189.8" y="305.7" text-anchor="middle">188.8</text>
<text x="1301.8" y="305.7" text-anchor="middle">189</text>
<text x="1413.8" y="305.7" text-anchor="middle">189.2</text>
<text x="1525.8" y="305.7" text-anchor="middle">189.4</text>
<text x="1637.8" y="305.7" text-anchor="middle">189.6</text>
<text x="1749.8" y="305.7" text-anchor="middle">189.8</text>
<rect x="0" y="352" width="1850" height="5" fill="#808080"/>
<rect x="0" y="357" width="1850" height="39.2" fill="#303030"/>
<rect x="22" y="367.8" width="59.2" height="21.6" rx="3" fill="#2e2e2e" stroke="#767676" stroke-width="1.1"/>
<path d="M59.6 375H70.6L65.1 380.5Z" fill="#fff"/>
<rect x="517" y="367.6" width="24.2" height="21.8" rx="3" fill="#2e2e2e" stroke="#767676" stroke-width="1.1"/>
<path d="M522.8 375.1H534.4L528.6 380.8Z" fill="#fff"/>
<circle cx="576.4" cy="378.9" r="11.7" fill="#1d66a4"/>
<circle cx="576.4" cy="378.7" r="5" fill="#ff0000"/>
<circle cx="611.6" cy="378.9" r="11.4" fill="#1e4a6e"/>
<rect x="607" y="373.6" width="9.1" height="10.2" fill="#18120f"/>
<rect x="0" y="397" width="778" height="433" fill="#1b5a88"/>
<rect x="0" y="397" width="778" height="34" fill="#0f2d52"/>
<rect x="191.5" y="397" width="5.2" height="433" fill="#f3f4f8"/>
<rect x="376.6" y="397" width="5.2" height="433" fill="rgba(8,30,60,0.45)"/>
<rect x="377.4" y="397" width="3.6" height="433" fill="#b8cadf"/>
<rect x="772.4" y="397" width="5.6" height="433" fill="#f3f4f8"/>
<rect x="326.4" y="441.8" width="40.3" height="24.8" fill="#888888"/>
<rect x="326.4" y="441.8" width="17.61" height="24.8" fill="#058205"/>
<rect x="326.4" y="472.6" width="40.3" height="24.8" fill="#888888"/>
<rect x="326.4" y="472.6" width="40.3" height="24.8" fill="#058205"/>
<rect x="326.4" y="504" width="40.3" height="24.8" fill="#888888"/>
<rect x="326.4" y="534.4" width="40.3" height="24.8" fill="#888888"/>
<rect x="326.4" y="534.4" width="40.3" height="24.8" fill="#058205"/>
<rect x="326.4" y="564.9" width="40.3" height="24.8" fill="#888888"/>
<rect x="326.4" y="564.9" width="4.51" height="24.8" fill="#058205"/>
<rect x="326.4" y="595.9" width="40.3" height="24.8" fill="#888888"/>
<rect x="326.4" y="595.9" width="25.79" height="24.8" fill="#058205"/>
<path d="M388.5 431.6V408Q388.5 405 391.5 405H437.4A12 10 0 0 1 449.4 415V431.6Z" fill="#808080"/>
<path d="M492 431.6V408Q492 405 495 405H551.6A12 10 0 0 1 563.6 415V431.6Z" fill="#808080"/>
<path d="M563.6 431.6V408Q563.6 405 566.6 405H609A12 10 0 0 1 621 415V431.6Z" fill="#808080"/>
<path d="M621 431.6V408Q621 405 624 405H694.9A12 10 0 0 1 706.9 415V431.6Z" fill="#808080"/>
<path d="M449.6 432V407.3Q449.6 404.3 452.6 404.3H480A12 10 0 0 1 492 414.3V432" fill="#1b5a88" stroke="#2f74ac" stroke-width="1"/>
<circle cx="420.1" cy="446.5" r="4.5" fill="#ff0000"/>
<rect x="444.7" y="441.6" width="8.7" height="9.7" fill="#0e2f50"/>
<rect x="395.3" y="461" width="248.7" height="1" fill="#9fbcd8"/>
<rect x="652.6" y="432" width="1" height="31.5" fill="#2d6a9a"/>
<rect x="395.3" y="497" width="248.7" height="1" fill="#a9c4de"/>
<path d="M686.5 482.5V590" fill="none" stroke="#d9e6f3" stroke-width="2.3" stroke-linecap="round"/>
<circle cx="686.5" cy="594.8" r="6.2" fill="url(#th)"/>
<rect x="777.7" y="397" width="1072.3" height="433" fill="#000"/>
<rect x="777.7" y="397" width="1072.3" height="19.9" fill="#0f2d52"/>
<circle cx="793.8" cy="435.7" r="6.6" fill="#dcdcdc"/>
<circle cx="865.3" cy="435.7" r="6.6" fill="#dcdcdc"/>
<path d="M794.4 488.6V493.2M807.51 489.6V493.2M820.62 489.6V493.2M833.73 489.6V493.2M846.84 489.6V493.2M859.95 489.6V493.2M873.06 489.6V493.2M886.17 489.6V493.2M899.28 489.6V493.2M912.39 489.6V493.2M925.5 488.6V493.2" fill="none" stroke="#a6a6a6" stroke-width="1"/>
<path d="M788.6 500H931.8" fill="none" stroke="#ececec" stroke-width="2.2" stroke-linecap="round"/>
<circle cx="820.6" cy="500" r="6.5" fill="url(#th)"/>
<path d="M788.6 549.9H931.8" fill="none" stroke="#ececec" stroke-width="2.2" stroke-linecap="round"/>
<circle cx="794.4" cy="549.9" r="6.5" fill="url(#th)"/>
<path d="M788.6 600H931.8" fill="none" stroke="#ececec" stroke-width="2.2" stroke-linecap="round"/>
<circle cx="794.4" cy="600" r="6.5" fill="url(#th)"/>
<circle cx="804.3" cy="650.3" r="5.6" fill="#ffffff"/>
<circle cx="804.3" cy="670.25" r="5.6" fill="#ffffff"/>
<circle cx="804.3" cy="670.25" r="2.8" fill="#101010"/>
<circle cx="804.3" cy="690.2" r="5.6" fill="#ffffff"/>
<rect x="1070" y="439" width="105.3" height="348.5" fill="#3e3e3e"/>
<path d="M1093.5 439V788M1147.5 439V788M1200.5 439V788M1254.5 439V788M1307.5 439V788M1361.5 439V788M1415.5 439V788M1468.5 439V788M1522.5 439V788M1575.5 439V788M1629.5 439V788M1682.5 439V788M1736.5 439V788M1790.5 439V788M1843.5 439V788M1057 439.5H1850M1057 509.5H1850M1057 578.5H1850M1057 648.5H1850M1057 717.5H1850M1057 787.5H1850" fill="none" stroke="rgba(255,255,255,0.28)" stroke-width="1"/>
<path d="M1175.5 439V788" fill="none" stroke="#6f7440" stroke-width="1.2"/>
<path d="M1057.6 439V788" fill="none" stroke="#98595c" stroke-width="1.3"/>
<polyline points="1057.5,787.9 1058.5,764.7 1059.5,769.7 1060.5,787.9 1061.5,783.8 1062.5,787.9 1063.5,786.6 1064.5,787.9 1065.5,787.9 1066.5,757.8 1067.5,755.3 1068.5,759.6 1069.5,787.9 1070.5,775.8 1071.5,787.9 1072.5,787.9 1073.5,761.5 1074.5,751.2 1075.5,787.9 1076.5,779.2 1077.5,787.9 1078.5,787.9 1079.5,787.9 1080.5,758.4 1081.5,787.9 1082.5,787.4 1083.5,787.9 1084.5,762.4 1085.5,769.0 1086.5,787.9 1087.5,787.9 1088.5,749.9 1089.5,787.9 1090.5,787.9 1091.5,746.3 1092.5,783.3 1093.5,761.3 1094.5,787.9 1095.5,787.0 1096.5,785.5 1097.5,787.9 1098.5,766.5 1099.5,776.6 1100.5,744.2 1101.5,778.8 1102.5,787.9 1103.5,787.9 1104.5,783.6 1105.5,781.4 1106.5,759.6 1107.5,755.4 1108.5,773.4 1109.5,785.8 1110.5,775.2 1111.5,760.8 1112.5,774.0 1113.5,787.9 1114.5,787.9 1115.5,787.9 1116.5,750.7 1117.5,746.3 1118.5,759.0 1119.5,783.6 1120.5,780.1 1121.5,759.0 1122.5,787.9 1123.5,787.9 1124.5,787.9 1125.5,787.9 1126.5,773.1 1127.5,787.9 1128.5,787.9 1129.5,763.6 1130.5,769.3 1131.5,787.9 1132.5,787.9 1133.5,787.9 1134.5,787.9 1135.5,787.9 1136.5,785.8 1137.5,787.9 1138.5,751.2 1139.5,744.4 1140.5,762.2 1141.5,766.8 1142.5,787.9 1143.5,787.9 1144.5,777.3 1145.5,776.1 1146.5,787.9 1147.5,782.1 1148.5,770.3 1149.5,787.9 1150.5,762.8 1151.5,755.6 1152.5,787.9 1153.5,787.9 1154.5,774.6 1155.5,773.0 1156.5,787.9 1157.5,787.9 1158.5,787.9 1159.5,787.2 1160.5,774.8 1161.5,768.5 1162.5,755.2 1163.5,763.8 1164.5,773.2 1165.5,779.2 1166.5,763.2 1167.5,775.6 1168.5,787.9 1169.5,749.9 1170.5,787.9 1171.5,776.0 1172.5,764.8 1173.5,778.8 1174.5,738.3 1175.5,693.5 1175.8,685.2 1176.5,704.7 1177.5,752.9 1178.5,785.7 1179.5,783.4 1180.5,753.2 1181.5,756.9 1182.5,742.3 1183.5,738.0 1184.5,759.3 1185.5,787.9 1186.5,770.3 1187.5,752.0 1188.5,762.4 1189.5,759.5 1190.5,765.3 1191.5,770.9 1192.5,765.8 1193.5,763.5 1194.5,750.9 1195.5,787.9 1196.5,775.4 1197.5,741.4 1198.5,688.5 1199.5,653.9 1199.5,653.9 1200.5,688.5 1201.5,741.4 1202.5,747.2 1203.5,768.1 1204.5,778.7 1205.5,785.2 1206.5,750.5 1207.5,764.3 1208.5,777.6 1209.5,737.2 1210.5,754.7 1211.5,756.7 1212.5,759.9 1213.5,776.3 1214.5,764.6 1215.5,755.7 1216.5,768.9 1217.5,753.2 1218.5,754.5 1219.5,752.0 1220.5,746.5 1221.5,785.3 1222.5,763.4 1223.5,768.4 1224.5,787.9 1225.5,761.4 1226.5,787.9 1227.5,758.2 1228.5,787.9 1229.5,781.0 1230.5,751.9 1231.5,779.9 1232.5,771.9 1233.5,732.5 1234.5,737.5 1235.5,773.1 1236.5,754.1 1237.5,752.2 1238.5,758.3 1239.5,720.7 1240.5,733.0 1241.5,722.3 1242.5,689.9 1243.5,660.8 1243.7,656.0 1244.5,675.4 1245.5,714.2 1246.5,723.4 1247.5,712.8 1248.5,702.2 1249.5,691.3 1250.5,678.7 1251.5,664.4 1252.5,615.6 1253.5,563.7 1254.4,541.8 1254.5,544.2 1255.5,571.7 1256.5,628.3 1257.5,667.3 1258.5,681.6 1259.5,693.5 1260.5,704.3 1261.5,714.9 1262.5,725.5 1263.5,774.1 1264.5,690.3 1265.5,656.4 1266.5,624.8 1267.2,612.1 1267.5,617.5 1268.5,641.4 1269.5,678.0 1270.5,700.2 1271.5,741.8 1272.5,722.7 1273.5,713.2 1274.5,740.4 1275.5,713.9 1276.5,740.1 1277.5,728.2 1278.5,741.4 1279.5,721.6 1280.5,742.0 1281.5,735.2 1282.5,732.3 1283.5,787.9 1284.5,732.8 1285.5,735.6 1286.5,751.8 1287.5,736.7 1288.5,744.3 1289.5,747.1 1290.5,756.5 1291.5,778.5 1292.5,787.9 1293.5,772.8 1294.5,772.1 1295.5,751.7 1296.5,753.3 1297.5,778.5 1298.5,744.1 1299.5,748.2 1300.5,763.2 1301.5,763.5 1302.5,774.4 1303.5,787.9 1304.5,768.9 1305.5,740.4 1306.5,736.0 1307.5,760.1 1308.5,755.4 1309.0,740.9 1309.5,758.3 1310.5,747.2 1311.5,762.7 1312.5,747.4 1313.5,754.7 1314.5,756.5 1315.5,787.9 1316.5,759.1 1317.5,770.0 1318.5,778.9 1319.5,771.6 1320.5,781.5 1321.5,764.3 1322.5,768.8 1323.5,787.9 1324.5,757.8 1325.5,777.1 1326.5,747.9 1327.5,787.9 1328.5,756.2 1329.5,750.1 1330.5,739.2 1331.5,787.9 1332.5,751.6 1333.5,751.8 1334.5,755.9 1335.5,762.0 1336.5,766.6 1337.5,787.9 1338.5,759.4 1339.5,783.0 1340.5,754.6 1341.5,776.9 1342.5,753.3 1343.5,770.7 1344.5,787.9 1345.5,764.5 1346.5,782.9 1347.5,787.9 1348.5,756.3 1349.5,787.9 1350.5,760.5 1351.5,759.0 1352.5,787.9 1353.5,758.3 1354.5,771.9 1355.5,787.9 1356.5,766.1 1357.5,787.9 1358.5,787.9 1359.5,766.9 1360.5,763.1 1361.0,745.7 1361.5,763.1 1362.5,787.8 1363.5,787.9 1364.5,778.9 1365.5,787.9 1366.5,774.4 1367.5,753.4 1368.5,783.9 1369.5,787.9 1370.5,765.0 1371.5,785.7 1372.5,787.9 1373.5,787.9 1374.5,767.5 1375.5,787.9 1376.5,787.9 1377.5,764.7 1378.5,766.0 1379.5,779.7 1380.5,787.8 1381.5,781.1 1382.5,750.9 1383.5,758.0 1384.5,787.9 1385.5,756.5 1386.5,758.5 1387.5,742.6 1388.5,760.4 1389.0,743.0 1389.5,760.4 1390.5,780.8 1391.5,767.7 1392.5,759.1 1393.5,756.8 1394.5,754.2 1395.5,787.9 1396.5,744.9 1397.5,750.6 1398.5,774.4 1399.5,787.9 1400.5,787.9 1401.5,787.9 1402.5,762.4 1403.5,776.1 1404.5,787.9 1405.5,772.6 1406.5,759.2 1407.5,748.5 1408.5,761.6 1409.5,778.5 1410.5,771.4 1411.5,787.9 1412.5,787.9 1413.5,775.6 1414.5,780.7 1415.5,772.8 1416.5,787.1 1417.5,787.9 1418.5,787.9 1419.5,776.1 1420.5,758.1 1421.5,758.9 1422.5,787.9 1423.5,787.9 1424.5,764.0 1425.5,775.6 1426.5,751.5 1427.5,787.9 1428.5,764.4 1429.5,773.0 1430.5,787.9 1431.5,787.9 1432.5,775.8 1433.5,756.9 1434.5,764.2 1435.5,764.8 1436.5,772.8 1437.5,778.1 1438.5,787.9 1439.5,787.9 1440.5,785.4 1441.5,785.3 1442.5,787.9 1443.5,777.6 1444.5,787.9 1445.5,787.9 1446.5,787.9 1447.5,787.9 1448.5,787.9 1449.5,785.0 1450.5,777.6 1451.5,766.9 1452.5,760.3 1453.5,787.9 1454.5,777.2 1455.5,779.6 1456.5,787.9 1457.5,764.5 1458.5,760.2 1459.5,787.9 1460.5,762.0 1461.5,782.5 1462.5,787.9 1463.5,772.5 1464.5,787.9 1465.5,787.9 1466.5,771.7 1467.5,787.9 1468.5,762.4 1469.5,787.9 1470.5,776.0 1471.5,761.4 1472.5,762.0 1473.5,747.2 1474.0,736.0 1474.5,753.4 1475.5,758.7 1476.5,762.0 1477.5,765.2 1478.5,772.6 1479.5,784.4 1480.5,787.9 1481.5,763.3 1482.5,753.0 1483.5,787.9 1484.5,758.8 1485.5,782.2 1486.5,782.7 1487.5,787.9 1488.5,787.9 1489.5,787.9 1490.5,782.8 1491.5,779.3 1492.5,745.0 1492.8,734.6 1493.5,759.0 1494.5,768.3 1495.5,787.9 1496.5,772.8 1497.5,786.8 1498.5,787.9 1499.5,787.9 1500.5,787.9 1501.5,787.9 1502.5,787.9 1503.5,761.5 1504.5,762.2 1505.5,787.9 1506.5,787.9 1507.5,769.7 1508.5,787.9 1509.5,787.9 1510.5,787.9 1511.5,787.9 1512.5,787.9 1513.5,785.8 1514.5,752.9 1515.5,770.6 1516.5,755.7 1517.5,760.3 1518.5,787.9 1519.5,772.7 1520.5,773.5 1521.5,787.9 1522.5,777.8 1523.5,787.9 1524.5,779.9 1525.5,760.3 1526.5,758.7 1527.5,732.9 1528.5,766.7 1529.5,753.3 1530.5,787.9 1531.5,772.5 1532.5,784.1 1533.5,785.3 1534.5,754.3 1535.5,751.4 1536.5,780.1 1537.5,787.9 1538.5,763.3 1539.5,781.5 1540.5,787.9 1541.5,749.8 1542.5,787.9 1543.5,750.7 1544.5,787.9 1545.5,774.6 1546.5,764.5 1547.0,747.1 1547.5,754.9 1548.5,754.9 1549.5,752.1 1550.5,766.9 1551.5,786.9 1552.5,761.5 1553.5,787.9 1554.5,767.0 1555.5,780.0 1556.5,764.8 1557.5,779.5 1558.5,787.9 1559.5,748.4 1560.5,773.4 1561.5,787.9 1562.5,773.8 1563.5,787.9 1564.5,758.5 1565.5,780.7 1566.5,787.9 1567.5,760.9 1568.5,747.1 1569.5,746.6 1570.5,787.9 1571.5,787.9 1572.5,744.4 1573.5,742.1 1574.5,778.9 1575.5,755.2 1576.5,787.9 1577.5,787.9 1578.5,771.6 1579.5,764.5 1580.5,752.2 1581.5,787.9 1582.5,781.6 1583.5,783.8 1584.5,785.7 1585.5,768.5 1586.5,747.7 1587.5,787.9 1588.5,781.5 1589.5,786.2 1590.5,787.9 1591.5,772.6 1592.5,752.7 1593.5,751.3 1594.5,779.8 1595.5,785.0 1596.5,756.1 1597.5,765.7 1598.5,761.9 1599.5,756.6 1600.5,787.9 1601.5,777.7 1602.5,771.6 1603.5,769.0 1604.5,750.6 1605.5,763.1 1606.5,787.9 1607.5,770.1 1608.5,787.9 1609.5,787.9 1610.5,781.3 1611.5,748.5 1611.7,741.6 1612.5,769.4 1613.5,787.9 1614.5,786.0 1615.5,777.0 1616.5,787.9 1617.5,777.9 1618.5,776.6 1619.5,768.6 1620.5,783.9 1621.5,776.3 1622.5,787.9 1623.5,787.9 1624.5,782.3 1625.5,784.0 1626.5,750.7 1627.5,757.5 1628.5,787.9 1629.5,764.0 1630.5,763.3 1631.5,765.1 1632.5,781.9 1633.5,776.6 1634.5,787.9 1635.5,787.9 1636.5,760.3 1637.5,773.7 1638.5,787.9 1639.5,772.4 1640.5,767.7 1641.5,787.9 1642.5,759.2 1643.5,756.4 1644.5,769.3 1645.5,773.1 1646.5,751.9 1647.5,780.3 1648.5,787.9 1649.5,784.7 1650.5,782.0 1651.5,787.9 1652.5,787.9 1653.5,787.9 1654.5,770.4 1655.5,784.2 1656.5,787.0 1657.5,775.4 1658.5,787.9 1659.5,763.1 1660.0,745.7 1660.5,763.1 1661.5,745.0 1662.5,769.7 1663.5,763.8 1664.5,787.9 1665.5,782.9 1666.5,763.8 1667.5,787.9 1668.5,764.2 1669.5,768.7 1670.5,766.7 1671.5,767.3 1672.5,750.2 1673.5,779.0 1674.5,787.9 1675.5,787.9 1676.5,785.9 1677.5,781.4 1678.5,787.9 1679.5,787.9 1680.5,761.9 1681.5,778.4 1682.5,739.2 1683.5,766.0 1684.5,786.6 1685.5,763.0 1686.5,787.9 1687.5,780.4 1688.5,784.3 1689.5,787.9 1690.5,763.2 1691.5,755.5 1692.5,783.7 1693.5,787.9 1694.5,758.3 1695.5,787.9 1696.5,766.0 1697.5,753.2 1698.5,750.0 1699.5,762.6 1700.5,781.8 1701.5,787.9 1702.5,760.8 1703.5,768.3 1704.5,787.9 1705.5,771.2 1706.5,785.6 1707.5,784.4 1708.5,780.2 1709.5,763.0 1710.5,765.1 1711.5,746.5 1712.5,778.6 1713.5,773.7 1714.5,778.6 1715.5,787.9 1716.5,762.8 1717.5,781.8 1718.5,787.9 1719.5,782.6 1720.5,787.9 1721.5,760.5 1722.5,766.9 1723.5,787.9 1724.5,768.3 1725.5,750.6 1726.5,787.9 1727.5,783.1 1728.5,787.9 1729.5,766.4 1730.5,787.9 1731.5,777.7 1732.5,768.8 1733.5,763.5 1734.5,764.6 1735.5,787.9 1736.5,774.0 1737.5,769.0 1738.5,787.5 1739.5,759.7 1740.0,742.3 1740.5,759.7 1741.5,775.0 1742.5,753.9 1743.5,735.5 1744.5,740.1 1745.5,777.2 1746.5,765.0 1747.5,786.7 1748.5,787.9 1749.5,780.4 1750.5,787.9 1751.5,771.2 1752.5,779.3 1753.5,787.5 1754.5,787.9 1755.5,787.9 1756.5,787.9 1757.5,787.9 1758.5,787.9 1759.5,787.9 1760.5,787.9 1761.5,787.9 1762.5,787.9 1763.5,766.3 1764.5,784.2 1765.5,786.8 1766.5,787.9 1767.5,787.9 1768.5,777.5 1769.5,779.0 1770.5,779.2 1771.5,787.9 1772.5,775.3 1773.5,757.5 1774.5,746.4 1775.5,779.2 1776.5,785.9 1777.5,773.8 1778.5,787.9 1779.5,760.8 1780.5,758.1 1781.5,765.7 1782.5,787.9 1783.5,768.4 1784.5,775.9 1785.5,782.4 1786.5,787.9 1787.5,756.3 1788.5,771.4 1789.5,763.9 1790.5,787.9 1791.5,764.4 1792.5,733.9 1792.9,720.0 1793.5,740.9 1794.5,775.7 1795.5,770.4 1796.5,774.2 1797.5,787.9 1798.5,750.5 1799.5,757.2 1800.5,769.0 1801.5,751.7 1802.5,749.9 1802.9,736.0 1803.5,756.9 1804.5,787.9 1805.5,787.9 1806.5,787.9 1807.5,787.9 1808.5,785.3 1809.5,764.2 1810.5,769.1 1811.5,787.9 1812.5,760.7 1813.5,767.2 1814.5,778.9 1815.5,787.5 1816.5,785.9 1817.5,787.9 1818.5,777.6 1819.5,765.7 1820.5,762.9 1821.5,758.2 1822.5,765.2 1823.5,749.9 1823.8,739.5 1824.5,763.8 1825.5,751.7 1826.5,763.8 1827.5,775.6 1828.5,780.9 1829.5,754.8 1830.5,787.9 1831.5,759.8 1832.5,766.4 1833.5,766.5 1834.5,787.9 1835.5,787.9 1836.5,787.9 1837.5,787.3 1838.5,763.6 1839.5,769.2 1840.5,780.3 1841.5,771.2 1842.5,755.2 1843.5,787.9 1844.5,780.3 1845.5,747.4 1846.5,785.5 1847.5,761.3 1848.5,787.9 1849.5,787.9 1850.5,766.0" fill="none" stroke="#e4e4e4" stroke-width="0.85" stroke-linejoin="round"/>
<circle cx="1254.4" cy="542.5" r="4" fill="#fff21f"/>
<circle cx="1267.1" cy="612.3" r="4" fill="#e5131d"/>
<circle cx="1199.5" cy="653.7" r="4" fill="#1f9fe0"/>
<circle cx="1175.7" cy="684.7" r="4" fill="#8a3fd9"/>
<text x="1044.6" y="444.1" text-anchor="end">-10.0</text>
<text x="1044.6" y="513.7" text-anchor="end">-20.0</text>
<text x="1044.6" y="583.3" text-anchor="end">-30.0</text>
<text x="1044.6" y="652.9" text-anchor="end">-40.0</text>
<text x="1044.6" y="722.5" text-anchor="end">-50.0</text>
<text x="1044.6" y="792.1" text-anchor="end">-60.0</text>
<text x="1093.4" y="804.7" text-anchor="middle">-60</text>
<text x="1146.9" y="804.7" text-anchor="middle">-40</text>
<text x="1200.5" y="804.7" text-anchor="middle">-20</text>
<text x="1254.1" y="804.7" text-anchor="middle">0</text>
<text x="1307.7" y="804.7" text-anchor="middle">20</text>
<text x="1361.3" y="804.7" text-anchor="middle">40</text>
<text x="1414.8" y="804.7" text-anchor="middle">60</text>
<text x="1468.4" y="804.7" text-anchor="middle">80</text>
<text x="1522.0" y="804.7" text-anchor="middle">100</text>
<text x="1575.6" y="804.7" text-anchor="middle">120</text>
<text x="1629.2" y="804.7" text-anchor="middle">140</text>
<text x="1682.7" y="804.7" text-anchor="middle">160</text>
<text x="1736.3" y="804.7" text-anchor="middle">180</text>
<text x="1789.9" y="804.7" text-anchor="middle">200</text>
<text x="1843.5" y="804.7" text-anchor="middle">220</text>
</svg>
<span class="t" style="font-size:16.0px;color:#d6d6d6;letter-spacing:0.05px;left:12.93px;top:19.4px;transform:scaleX(1.07);">Connection</span>
<span class="t" style="font-size:16.0px;color:#d6d6d6;left:125.2px;top:19.4px;transform:scaleX(1.0271);">Recorder</span>
<span class="t" style="font-size:16.0px;left:217.95px;top:19.4px;transform:scaleX(0.9828);">FC0013</span>
<span class="t" style="font-size:18.6px;left:12.83px;top:56.6px;transform:scaleX(0.872);">AGC</span>
<span class="t" style="font-size:18.0px;left:12.12px;top:95.9px;transform:scaleX(0.9785);">Gain</span>
<span class="t" style="font-size:18.1px;left:11.98px;top:134.9px;transform:scaleX(1.0172);">Corr.</span>
<span class="t" style="font-size:18.0px;left:11.89px;top:172.6px;transform:scaleX(0.9848);">Delta</span>
<span class="t" style="font-size:16.3px;left:123.21px;top:59.2px;transform:scaleX(1.0452);">On/Off</span>
<span class="t" style="font-size:18.2px;color:#f6ffe6;letter-spacing:0.21px;left:117.29px;top:134.5px;transform:scaleX(1.07);">042 ppm</span>
<span class="t" style="font-size:18.2px;color:#f6ffe6;left:117.3px;top:172.4px;transform:scaleX(1.0538);">000 kHz</span>
<span class="t" style="font-size:11px;letter-spacing:0.23px;left:378.26px;top:24px;transform:scaleX(1.07);">Zoom X</span>
<span class="t" style="font-size:11px;letter-spacing:0.12px;left:378.26px;top:84px;transform:scaleX(1.07);">Zoom Y</span>
<span class="t" style="font-size:11px;letter-spacing:0.33px;left:389.88px;top:138.6px;transform:scaleX(1.07);">Mouse</span>
<span class="t" style="font-size:11px;letter-spacing:0.05px;left:390.21px;top:154.9px;transform:scaleX(1.07);">Click and Drag Zooms</span>
<span class="t" style="font-size:16px;left:1197.61px;top:314.6px;transform:scaleX(1.016);">Frequency (MHz)</span>
<span class="t" style="font-size:16px;left:598px;top:164.19px;transform:rotate(-90deg) scaleX(1.0138);">Magnitude (dB)</span>
<span class="t" style="font-size:12.4px;left:23.4px;top:372.1px;transform:scaleX(1.0411);">7A</span>
<span class="t" style="font-size:16.0px;left:107.08px;top:368.9px;transform:scaleX(0.9643);">EId: 1188</span>
<span class="t" style="font-size:16.0px;color:#ffff2e;left:190.96px;top:368.9px;transform:scaleX(0.9749);">NDR NDS HAN</span>
<span class="t" style="font-size:16.0px;left:318.05px;top:368.9px;transform:scaleX(0.981);">2025-08-19&nbsp; 19:59:30 Z</span>
<span class="t" style="font-size:19.4px;color:#ffff33;letter-spacing:-0.07px;left:1.87px;top:402.3px;">No Service Selected</span>
<span class="t" style="font-size:19.4px;letter-spacing:0.05px;left:200.54px;top:402.3px;">Service Quality</span>
<span class="t" style="font-size:16.0px;left:2.68px;top:436.7px;transform:scaleX(0.9595);">NDR 1 NDS HAN</span>
<span class="t" style="font-size:16.0px;left:2.7px;top:461.9px;transform:scaleX(0.9453);">NDR 2 NDS</span>
<span class="t" style="font-size:16.0px;left:2.7px;top:487.1px;transform:scaleX(0.9483);">NDR Blue</span>
<span class="t" style="font-size:16.0px;left:2.67px;top:512.3px;transform:scaleX(0.9711);">NDR Info NDS</span>
<span class="t" style="font-size:16.0px;left:2.67px;top:537.5px;transform:scaleX(0.9668);">NDR Info Spezial</span>
<span class="t" style="font-size:16.0px;left:2.66px;top:562.7px;transform:scaleX(0.9779);">NDR Kultur</span>
<span class="t" style="font-size:16.0px;left:2.7px;top:587.9px;transform:scaleX(0.9454);">NDR Schlager</span>
<span class="t" style="font-size:16.0px;left:2.72px;top:613.1px;transform:scaleX(0.9272);">N-JOY</span>
<span class="t" style="font-size:13.4px;left:205.96px;top:447.7px;transform:scaleX(0.9761);">SNR (dB)</span>
<span class="t" style="font-size:13.4px;letter-spacing:-0.08px;left:205.72px;top:478.55px;">FIC (ok %)</span>
<span class="t" style="font-size:13.4px;left:205.74px;top:509.4px;transform:scaleX(0.9807);">RS (ok %)</span>
<span class="t" style="font-size:13.4px;left:205.65px;top:540.25px;transform:scaleX(1.0626);">Null Symbol</span>
<span class="t" style="font-size:13.4px;left:205.92px;top:571.1px;transform:scaleX(1.0276);">SymbolTime (ms)</span>
<span class="t" style="font-size:13.4px;letter-spacing:0.08px;left:205.72px;top:601.95px;">FrameTime (ms)</span>
<span class="t" style="font-size:10.9px;left:335.96px;top:449.2px;transform:scaleX(1.0196);">15,5</span>
<span class="t" style="font-size:10.9px;letter-spacing:0.33px;left:336.42px;top:479.9px;transform:scaleX(1.07);">100</span>
<span class="t" style="font-size:10.9px;left:335.06px;top:572px;transform:scaleX(1.0635);">0,16</span>
<span class="t" style="font-size:10.9px;left:334.97px;top:603px;transform:scaleX(1.0691);">95,9</span>
<span class="t" style="font-size:16.0px;color:#d6d6d6;letter-spacing:0.04px;left:400.82px;top:409.8px;">Sync</span>
<span class="t" style="font-size:16.0px;left:461.59px;top:409.8px;">TII</span>
<span class="t" style="font-size:16.0px;color:#d6d6d6;letter-spacing:0.24px;left:505.8px;top:409.8px;transform:scaleX(1.07);">Audio</span>
<span class="t" style="font-size:16.0px;color:#d6d6d6;left:576.61px;top:409.8px;transform:scaleX(0.9848);">AAC</span>
<span class="t" style="font-size:16.0px;color:#d6d6d6;letter-spacing:0.17px;left:634.19px;top:409.8px;transform:scaleX(1.07);">Options</span>
<span class="t" style="font-size:13.4px;left:658.74px;top:451.1px;transform:scaleX(1.0351);">Threshold</span>
<span class="t" style="font-size:14.0px;letter-spacing:0.04px;left:394.89px;top:479.6px;transform:scaleX(1.07);">Pattern</span>
<span class="t" style="font-size:14.0px;letter-spacing:0.45px;left:462.29px;top:479.6px;transform:scaleX(1.07);">MainId</span>
<span class="t" style="font-size:14.0px;left:528.22px;top:479.6px;transform:scaleX(1.07);">SubId</span>
<span class="t" style="font-size:14.0px;letter-spacing:0.15px;left:586.22px;top:479.6px;transform:scaleX(1.07);">Strength</span>
<span class="t" style="font-size:14.3px;left:396.98px;top:510px;transform:scaleX(0.9406);">0x71</span>
<span class="t" style="font-size:14.3px;left:464.37px;top:510px;transform:scaleX(0.9621);">31</span>
<span class="t" style="font-size:14.3px;left:530.2px;top:510px;transform:scaleX(1.07);">2</span>
<span class="t" style="font-size:14.3px;left:588.27px;top:510px;transform:scaleX(0.959);">0.94</span>
<span class="t" style="font-size:14.0px;left:671.68px;top:609px;transform:scaleX(0.9731);">0.02</span>
<span class="t" style="font-size:14.0px;left:1240.19px;top:398.9px;transform:scaleX(1.0208);">Channel Impulse Response (CIR)</span>
<span class="t" style="font-size:11px;left:804.02px;top:430.2px;transform:scaleX(1.0191);">Freeze</span>
<span class="t" style="font-size:11px;letter-spacing:0.08px;left:875.53px;top:430.2px;transform:scaleX(1.07);">Gradient</span>
<span class="t" style="font-size:11px;letter-spacing:0.12px;left:791.78px;top:471.4px;transform:scaleX(1.07);">Smoothing Level</span>
<span class="t" style="font-size:11px;letter-spacing:0.14px;left:792.26px;top:525.1px;transform:scaleX(1.07);">Zoom X</span>
<span class="t" style="font-size:11px;letter-spacing:0.11px;left:792.26px;top:575.2px;transform:scaleX(1.07);">Zoom Y</span>
<span class="t" style="font-size:11px;left:792.57px;top:624.9px;transform:scaleX(1.0588);">x-Axis</span>
<span class="t" style="font-size:11px;left:815.79px;top:645.1px;transform:scaleX(1.0534);">Samples</span>
<span class="t" style="font-size:11px;letter-spacing:0.07px;left:815.68px;top:665px;transform:scaleX(1.07);">Distance</span>
<span class="t" style="font-size:11px;letter-spacing:0.19px;left:816.19px;top:685px;transform:scaleX(1.07);">Time</span>
<span class="t" style="font-size:13.7px;letter-spacing:0.07px;left:1381.5px;top:814.3px;">Distance Difference (km)</span>
<span class="t" style="font-size:13.7px;left:981px;top:659.49px;transform:rotate(-90deg) scaleX(0.9869);">Magnitude (dB)</span>
<svg width="1850" height="830" viewBox="0 0 1850 830">
<rect x="93" y="357" width="182.8" height="39.6" fill="rgba(17,128,17,0.68)"/>
<rect x="90.9" y="357" width="2.2" height="39.4" fill="#aebfae"/>
<rect x="503.4" y="357" width="3.5" height="39.6" fill="#ffffff"/>
<rect x="0" y="396" width="1850" height="1" fill="rgba(214,226,242,0.92)"/>
</svg>
</div></body></html>
